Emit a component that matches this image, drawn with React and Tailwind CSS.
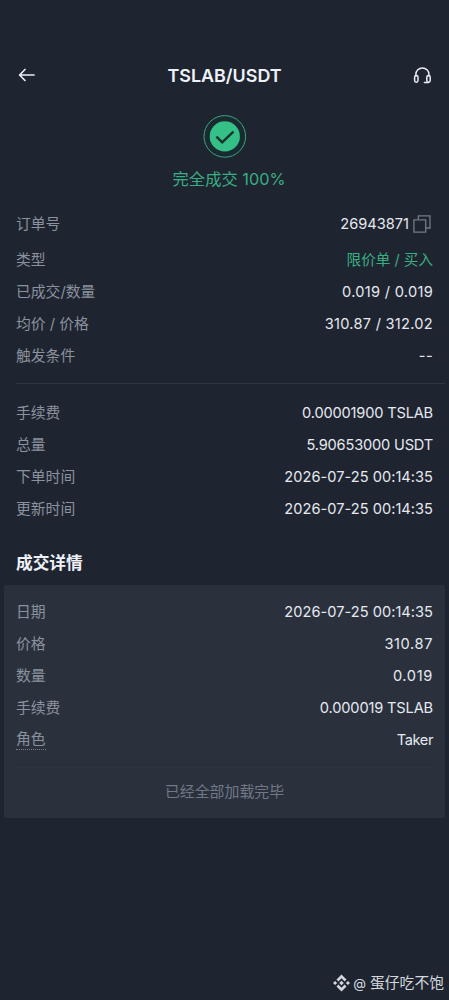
function Row({ label, value, height = 'h-8', tone = 'text-[#e6e9f0]', spacing = '', dotted = false, icon = null }) {
  return (
    <div className={`flex items-center justify-between ${height}`}>
      <span
        className={`text-[14.8px] text-[#8b919e] ${dotted ? 'border-b border-dotted border-[#777e8b] leading-[19px]' : 'leading-[20px]'}`}
      >
        {label}
      </span>
      <span className={`flex items-center whitespace-pre text-[14.6px] leading-[20px] ${tone} ${spacing}`}>
        {value}
        {icon}
      </span>
    </div>
  );
}

function CopyIcon() {
  return (
    <svg className="mr-[2px] ml-[4px]" width="18" height="18" viewBox="0 0 18 18" fill="none" stroke="#737a87" strokeWidth="1.3">
      <path d="M0.9 4.9H12.7V17.1H0.9Z" />
      <path d="M5.3 4.6V0.9H17V13H13" />
    </svg>
  );
}

export default function App() {
  return (
    <div className="flex h-[1000px] w-[449px] flex-col bg-[#1f2530] font-['Inter','Noto_Sans_CJK_SC',sans-serif]">
      <header className="mt-[59px] flex h-8 items-center justify-between pr-[17px] pl-[18px]">
        <svg width="18" height="14" viewBox="0 0 18 14" fill="none" stroke="#e9edf5" strokeWidth="1.7" strokeLinecap="round" strokeLinejoin="round">
          <path d="M7 1.5L1.6 7L7 12.5M1.6 7H16" />
        </svg>
        <h1 className="pt-px text-[17.9px] leading-6 font-semibold text-[#eef1f8]">TSLAB/USDT</h1>
        <svg width="19" height="18" viewBox="0 0 19 18" fill="none" stroke="#e9edf5" strokeWidth="1.5" strokeLinecap="round" strokeLinejoin="round">
          <path d="M2.9 10V8.2A6.5 6.3 0 0 1 15.9 8.2V10" />
          <rect x="1.6" y="9.6" width="3.4" height="6.6" rx="1.7" />
          <rect x="13.8" y="9.6" width="3.4" height="6.6" rx="1.7" />
          <path d="M15.5 16.5H11.4" />
        </svg>
      </header>

      <section className="flex flex-col items-center pt-[24px]">
        <svg width="44" height="44" viewBox="0 0 44 44" fill="none">
          <circle cx="21.8" cy="21.4" r="20.8" fill="#192b30" stroke="#3aa57e" strokeWidth="1" />
          <circle cx="21.8" cy="21.4" r="15.1" fill="#34c087" />
          <path d="M13.4 21.6L19.2 27.4L30.4 16.6" stroke="#18322f" strokeWidth="2.4" />
        </svg>
        <p className="mt-[8px] ml-[9px] text-[16.3px] leading-6 text-[#3aad82]">完全成交 100%</p>
      </section>

      <section className="mt-[16px] flex flex-col pr-4 pl-4">
        <Row label="订单号" value="26943871" height="h-[33px]" icon={<CopyIcon />} />
        <div className="h-[4px]" />
        <Row label="类型" value="限价单 / 买入" tone="text-[#3aad82]" />
        <Row label="已成交/数量" value="0.019 / 0.019" spacing="tracking-[0.29px]" />
        <Row label="均价 / 价格" value="310.87 / 312.02" spacing="tracking-[0.27px]" />
        <Row label="触发条件" value="--" spacing="tracking-[0.4px]" />
      </section>
      <div className="mt-[11px] mr-[4px] ml-4 h-px bg-[#303743]" />

      <section className="mt-[13px] flex flex-col px-4">
        <Row label="手续费" value="0.00001900 TSLAB" spacing="tracking-[-0.17px]" />
        <Row label="总量" value="5.90653000 USDT" spacing="tracking-[-0.18px]" />
        <Row label="下单时间" value="2026-07-25 00:14:35" spacing="tracking-[0.03px]" />
        <Row label="更新时间" value="2026-07-25 00:14:35" spacing="tracking-[0.03px]" />
      </section>

      <h2 className="mt-[26px] ml-4 text-[16.7px] leading-6 font-bold text-[#eef1f8]">成交详情</h2>

      <section className="mx-1 mt-[10px] flex h-[233px] flex-col rounded-[2px] bg-[#2a313d] px-3 pt-[11px]">
        <Row label="日期" value="2026-07-25 00:14:35" spacing="tracking-[0.03px]" />
        <Row label="价格" value="310.87" spacing="tracking-[0.6px]" />
        <Row label="数量" value="0.019" spacing="tracking-[0.65px]" />
        <Row label="手续费" value="0.000019 TSLAB" spacing="tracking-[-0.15px]" />
        <Row label="角色" value="Taker" spacing="tracking-[-0.4px]" dotted />
        <div className="mt-[11px] h-px bg-[#2d3440]" />
        <p className="mt-[14px] text-center text-[14.9px] leading-5 text-[#717886]">已经全部加载完毕</p>
      </section>

      <footer className="mt-auto mb-[7px] flex h-5 items-center justify-end pr-[5px] text-[#d3d6dc]">
        <svg width="17" height="18" viewBox="0 0 17 18" fill="currentColor">
          <path d="M8.5 0.5L13.5 5.5L11.6 7.4L8.5 4.3L5.4 7.4L3.5 5.5Z" />
          <path d="M8.5 17.5L13.5 12.5L11.6 10.6L8.5 13.7L5.4 10.6L3.5 12.5Z" />
          <path d="M8.5 6.7L10.8 9L8.5 11.3L6.2 9ZM2.1 6.9L4.2 9L2.1 11.1L0 9ZM14.9 6.9L17 9L14.9 11.1L12.8 9Z" />
        </svg>
        <span className="ml-[3px] text-[13.2px] leading-5">@</span>
        <span className="ml-[4px] text-[14.8px] leading-5">蛋仔吃不饱</span>
      </footer>
    </div>
  );
}
